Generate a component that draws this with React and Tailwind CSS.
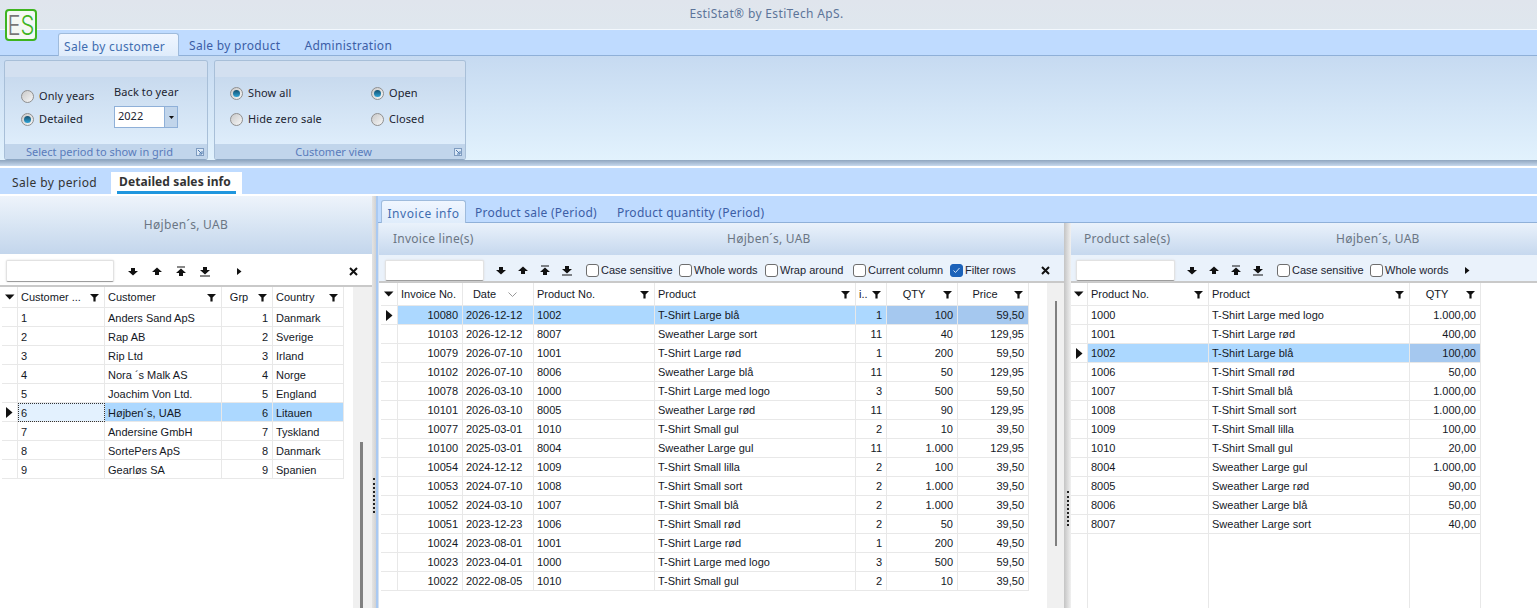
import React from "react";

const F = () => (
  <svg width="9" height="9" viewBox="0 0 9 9" className="shrink-0"><path d="M0 1h9L5.6 4.6V8.5H3.4V4.6z" fill="#111" /></svg>
);
const Down = () => (<svg width="10" height="9" viewBox="0 0 10 9"><path d="M3 1h4v3h3L5 8.5 0 4h3z" fill="#111" /></svg>);
const Up = () => (<svg width="10" height="9" viewBox="0 0 10 9"><path d="M3 8h4V5h3L5 .5 0 5h3z" fill="#111" /></svg>);
const Top = () => (<svg width="10" height="11" viewBox="0 0 10 11"><path d="M1 .5h8v1H1z" fill="#111" /><path d="M3 10h4V7h3L5 2.5 0 7h3z" fill="#111" /></svg>);
const Bot = () => (<svg width="10" height="11" viewBox="0 0 10 11"><path d="M0 9.5h10v1H0z" fill="#111" /><path d="M3 1h4v3h3L5 8.5 0 4h3z" fill="#111" /></svg>);
const Next = () => (<svg width="5" height="9" viewBox="0 0 5 9"><path d="M0 1l4.5 3.5L0 8z" fill="#111" /></svg>);
const X = () => (<svg width="9" height="9" viewBox="0 0 9 9"><path d="M1 1l7 7M8 1L1 8" stroke="#111" strokeWidth="2" /></svg>);
const HeadTri = () => (<svg width="10" height="6" viewBox="0 0 10 6"><path d="M0 .5h9.5L4.7 5.5z" fill="#111" /></svg>);
const RowTri = () => (<svg width="7" height="11" viewBox="0 0 7 11"><path d="M0 0l6.5 5.5L0 11z" fill="#111" /></svg>);
const Launcher = () => (
  <svg width="8" height="8" viewBox="0 0 8 8"><rect x=".5" y=".5" width="7" height="7" fill="#dbe8f6" stroke="#7f9cc0" /><path d="M2 2l3.5 3.5M6 3v3H3" stroke="#4d78ad" fill="none" /></svg>
);

function Radio({ on, label }) {
  return (
    <div className="flex items-center gap-[5px] h-[16px]">
      <span className="w-[13px] h-[13px] rounded-full border border-[#8f8f8f] bg-gradient-to-br from-[#c9c9c9] to-[#f7f7f7] flex items-center justify-center">
        {on && <span className="w-[7px] h-[7px] rounded-full bg-gradient-to-b from-[#14506f] to-[#2fa5d8]" />}
      </span>
      <span className="text-[11px] text-[#1c2430] tracking-[0.1px]">{label}</span>
    </div>
  );
}

function Group({ w, label, children }) {
  return (
    <div className="flex flex-col rounded-[3px] border border-[#a8bfd8] border-b-[#8ea8c4] overflow-hidden" style={{ width: w }}>
      <div className="h-[16px] bg-[#d3e0f0]" />
      <div className="flex-1 bg-gradient-to-b from-[#c8daee] to-[#deedfb]">{children}</div>
      <div className="h-[15px] bg-[#c1d5eb] flex items-center">
        <span className="flex-1 text-center text-[11px] leading-none text-[#5a7cbc] pr-[2px]">{label}</span>
        <span className="mr-[3px] flex"><Launcher /></span>
      </div>
    </div>
  );
}

function Check({ on, label, w }) {
  return (
    <div className="flex items-center gap-[2px] text-[11px] text-[#1c2430] whitespace-nowrap" style={{ width: w, fontFamily: '"Liberation Sans", sans-serif' }}>
      <span className={"w-[13px] h-[13px] rounded-[3px] border flex items-center justify-center shrink-0 " + (on ? "bg-[#1c62b9] border-[#1c62b9]" : "bg-white border-[#6e6e6e]")}>
        {on && <svg width="9" height="9" viewBox="0 0 9 9"><path d="M1.5 4.5l2 2 4-4.5" stroke="#cfe2f7" fill="none" /></svg>}
      </span>
      {label}
    </div>
  );
}

function NavIcons({ gap }) {
  return (
    <div className={"flex items-center " + gap}>
      <span className="flex"><Down /></span>
      <span className="flex"><Up /></span>
      <span className="flex"><Top /></span>
      <span className="flex"><Bot /></span>
    </div>
  );
}

const line = "border-r border-b border-[#e8e8e8]";

function Grid({ cols, rows, current, focus = -1, hot = [], ind, headH = "h-[23px]", extend = false, textPad = "" }) {
  return (
    <div className={"text-[11px] text-[#14181f] " + (extend ? "flex flex-col flex-1 min-h-0" : "")} style={{ fontFamily: '"Liberation Sans", sans-serif' }}>
      <div className={"flex " + headH}>
        <div className={"flex items-center justify-center " + line} style={{ width: ind }}><HeadTri /></div>
        {cols.map((c, i) => (
          <div key={i} className={"flex items-center pl-[3px] pr-[5px] " + line} style={{ width: c.w }}>
            <span className={"flex-1 whitespace-nowrap overflow-hidden " + (c.hc ? "text-center pr-[5px]" : "")}>{c.t}</span>
            {c.sort ? <svg width="9" height="5" viewBox="0 0 9 5" className="mr-[11px]"><path d="M.5.5l4 4 4-4" stroke="#999" fill="none" /></svg> : c.nof ? null : <F />}
          </div>
        ))}
      </div>
      {rows.map((r, ri) => {
        const sel = ri === current;
        return (
          <div key={ri} className="flex h-[19px]">
            <div className={"flex items-center justify-center " + line} style={{ width: ind }}>{sel && <RowTri />}</div>
            {cols.map((c, i) => {
              const isFocus = sel && i === focus;
              return (
                <div
                  key={i}
                  className={"flex items-center px-[3px] whitespace-nowrap overflow-hidden " + textPad + " " + line + " " + (c.right ? "justify-end pr-[4px] " : "") + (isFocus ? "bg-[#e3f1fe] outline-1 outline-dotted -outline-offset-1 outline-[#333] " : sel ? (hot.includes(i) ? "bg-[#a5c8ef] " : "bg-[#acd8ff] ") : "")}
                  style={{ width: c.w }}
                >
                  {r[i]}
                </div>
              );
            })}
          </div>
        );
      })}
      {extend && (
        <div className="flex flex-1">
          <div className="border-r border-[#e8e8e8]" style={{ width: ind }} />
          {cols.map((c, i) => <div key={i} className="border-r border-[#e8e8e8]" style={{ width: c.w }} />)}
        </div>
      )}
    </div>
  );
}

function PanelHead({ left, name, cx, ml }) {
  return (
    <div className="h-[32px] shrink-0 bg-gradient-to-b from-[#eaf2fb] to-[#c6d8ee] flex items-center text-[12px] text-[#6b7684] tracking-[0.25px] relative">
      <span style={{ marginLeft: ml }}>{left}</span>
      <span className="absolute" style={{ left: cx }}>{name}</span>
    </div>
  );
}

const Search = ({ w, h = 21 }) => <div className="shrink-0 bg-white border border-[#e2e2e2] border-b-[#9d9d9d] rounded-[2px] shadow-[0_0_2px_#d8d8d8]" style={{ width: w, height: h }} />;

const custCols = [
  { t: "Customer ...", w: 87 }, { t: "Customer", w: 117 }, { t: "Grp", w: 51, hc: true, right: true }, { t: "Country", w: 71 },
];
const custRows = [
  ["1", "Anders Sand ApS", "1", "Danmark"],
  ["2", "Rap AB", "2", "Sverige"],
  ["3", "Rip Ltd", "3", "Irland"],
  ["4", "Nora ´s Malk AS", "4", "Norge"],
  ["5", "Joachim Von Ltd.", "5", "England"],
  ["6", "Højben´s, UAB", "6", "Litauen"],
  ["7", "Andersine GmbH", "7", "Tyskland"],
  ["8", "SortePers ApS", "8", "Danmark"],
  ["9", "Gearløs SA", "9", "Spanien"],
];
const invCols = [
  { t: "Invoice No.", w: 65, right: true, nof: true },
  { t: "Date", w: 71, hc: true, sort: true, nof: true },
  { t: "Product No.", w: 121 },
  { t: "Product", w: 201 },
  { t: "i..", w: 31, right: true },
  { t: "QTY", w: 71, right: true, hc: true },
  { t: "Price", w: 71, right: true, hc: true },
];
const invRows = [
  ["10080", "2026-12-12", "1002", "T-Shirt Large blå", "1", "100", "59,50"],
  ["10103", "2026-12-12", "8007", "Sweather Large sort", "11", "40", "129,95"],
  ["10079", "2026-07-10", "1001", "T-Shirt Large rød", "1", "200", "59,50"],
  ["10102", "2026-07-10", "8006", "Sweather Large blå", "11", "50", "129,95"],
  ["10078", "2026-03-10", "1000", "T-Shirt Large med logo", "3", "500", "59,50"],
  ["10101", "2026-03-10", "8005", "Sweather Large rød", "11", "90", "129,95"],
  ["10077", "2025-03-01", "1010", "T-Shirt Small gul", "2", "10", "39,50"],
  ["10100", "2025-03-01", "8004", "Sweather Large gul", "11", "1.000", "129,95"],
  ["10054", "2024-12-12", "1009", "T-Shirt Small lilla", "2", "100", "39,50"],
  ["10053", "2024-07-10", "1008", "T-Shirt Small sort", "2", "1.000", "39,50"],
  ["10052", "2024-03-10", "1007", "T-Shirt Small blå", "2", "1.000", "39,50"],
  ["10051", "2023-12-23", "1006", "T-Shirt Small rød", "2", "50", "39,50"],
  ["10024", "2023-08-01", "1001", "T-Shirt Large rød", "1", "200", "49,50"],
  ["10023", "2023-04-01", "1000", "T-Shirt Large med logo", "3", "500", "59,50"],
  ["10022", "2022-08-05", "1010", "T-Shirt Small gul", "2", "10", "39,50"],
];
const prodCols = [
  { t: "Product No.", w: 121 }, { t: "Product", w: 201 }, { t: "QTY", w: 71, right: true, hc: true },
];
const prodRows = [
  ["1000", "T-Shirt Large med logo", "1.000,00"],
  ["1001", "T-Shirt Large rød", "400,00"],
  ["1002", "T-Shirt Large blå", "100,00"],
  ["1006", "T-Shirt Small rød", "50,00"],
  ["1007", "T-Shirt Small blå", "1.000,00"],
  ["1008", "T-Shirt Small sort", "1.000,00"],
  ["1009", "T-Shirt Small lilla", "100,00"],
  ["1010", "T-Shirt Small gul", "20,00"],
  ["8004", "Sweather Large gul", "1.000,00"],
  ["8005", "Sweather Large rød", "90,00"],
  ["8006", "Sweather Large blå", "50,00"],
  ["8007", "Sweather Large sort", "40,00"],
];

const Grip = () => (
  <div className="w-[2px] h-[35px] border-l-2 border-dotted border-[#222]" />
);

export default function App() {
  return (
    <div className="w-[1537px] h-[608px] overflow-hidden bg-white flex flex-col relative" style={{ fontFamily: '"Noto Sans", Tahoma, sans-serif' }}>
      <div className="h-[30px] bg-gradient-to-b from-[#e0e5ed] to-[#dfe7ee] flex items-center justify-center text-[12px] tracking-[0.35px] text-[#5c7499] border-b border-[#f3f8fd] pb-[2px] pr-[4px]">
        EstiStat® by EstiTech ApS.
      </div>
      <div className="absolute left-[5px] top-[9px] w-[32px] h-[32px] rounded-[4px] border-2 border-[#3eb41f] bg-[#f4f8f4] flex items-center justify-center text-[22px] leading-none" style={{ fontFamily: 'Inter, sans-serif' }}>
        <span className="scale-y-[1.25] flex font-light">
          <span className="text-[#777]">E</span><span className="text-[#3eb41f]">S</span>
        </span>
      </div>
      <div className="h-[26px] bg-[#bfdbff] border-b border-[#8fb0d8] flex items-end pl-[58px] text-[12px] text-[#3c5ea6] tracking-[0.3px]">
        <div className="w-[121px] h-[23px] -mb-px bg-gradient-to-b from-[#f0f6ff] to-[#dfecfb] border border-[#9fbbdc] border-b-0 rounded-t-[3px] flex items-center justify-center text-[#3f6db0] pt-[3px] pr-[8px]">Sale by customer</div>
        <div className="ml-[10px] h-[23px] flex items-center pt-[5px]">Sale by product</div>
        <div className="ml-[24px] h-[23px] flex items-center pt-[5px]">Administration</div>
      </div>
      <div className="h-[104px] bg-gradient-to-b from-[#c6daf1] to-[#e2f2fd] flex gap-[6px] pl-[4px] pt-[4px]">
        <Group w={204} label="Select period to show in grid">
          <div className="flex pl-[16px]">
            <div className="flex flex-col gap-[7px] pt-[11px] w-[93px]">
              <Radio label="Only years" />
              <Radio on label="Detailed" />
            </div>
            <div className="pt-[6px]">
              <div className="text-[11px] text-[#1c2430] leading-[18px] tracking-[0.1px]">Back to year</div>
              <div className="mt-[5px] flex w-[64px] h-[22px] border border-[#8fb0d8] bg-white text-[11px] text-[#1c2430]">
                <span className="flex-1 pl-[3px] leading-[18px]">2022</span>
                <span className="w-[13px] bg-[#c1d5eb] border-l border-[#8fb0d8] flex items-center justify-center">
                  <svg width="5" height="3" viewBox="0 0 5 3"><path d="M0 0h5L2.5 3z" fill="#111" /></svg>
                </span>
              </div>
            </div>
          </div>
        </Group>
        <Group w={252} label="Customer view">
          <div className="grid grid-cols-[141px_80px] gap-y-[10px] pl-[15px] pt-[8px]">
            <Radio on label="Show all" />
            <Radio on label="Open" />
            <Radio label="Hide zero sale" />
            <Radio label="Closed" />
          </div>
        </Group>
      </div>
      <div className="h-[8px] bg-gradient-to-b from-[#8fa5bf] to-[#c7d9ee] border-b-2 border-[#fff]" />
      <div className="h-[28px] bg-[#bfdbff] flex items-end text-[12px] text-[#333] border-b-2 border-[#fff]">
        <div className="pl-[12px] w-[111px] h-[22px] flex items-center tracking-[0.4px]">Sale by period</div>
        <div className="w-[131px] h-[22px] bg-white pl-[6px] pr-[6px] flex flex-col">
          <span className="flex-1 flex items-center pl-[2px] pt-[1px] font-bold whitespace-nowrap text-[12px] tracking-[0.1px]">Detailed sales info</span>
          <span className="h-[3px] bg-[#1f96de]" />
        </div>
      </div>

      <div className="flex-1 flex min-h-0">
        {/* left */}
        <div className="w-[372px] flex flex-col">
          <div className="h-[58px] bg-gradient-to-b from-[#eef4fb] to-[#c3d6ec] flex items-center justify-center text-[12px] text-[#6b7684] tracking-[0.3px]">Højben´s, UAB</div>
          <div className="h-[33px] flex items-center pl-[6px] pr-[14px] pt-[3px] border-b-2 border-[#c9c9c9]">
            <Search w={108} h={22} />
            <div className="ml-[14px]"><NavIcons gap="gap-[14px]" /></div>
            <span className="ml-[27px] flex"><Next /></span>
            <span className="ml-auto flex"><X /></span>
          </div>
          <div className="flex flex-1 min-h-0">
            <div className="w-[353px] pl-[2px]"><Grid cols={custCols} rows={custRows} current={5} focus={0} ind={16} headH="h-[21px]" textPad="pt-[2px]" /></div>
            <div className="w-[19px] bg-[#f0f0f0] pt-[155px] pr-[2px] flex justify-center"><div className="w-[3px] h-full bg-[#808080]" /></div>
          </div>
        </div>
        {/* splitter */}
        <div className="w-[4px] bg-gradient-to-r from-[#e4e4e4] to-[#d2d2d2] flex items-center justify-center pt-[186px]"><Grip /></div>
        {/* right area */}
        <div className="flex-1 flex flex-col min-w-0 border-l-2 border-[#a9c9f2]">
          <div className="h-[27px] bg-[#bfdbff] border-b border-[#8fb0d8] flex items-end pl-[3px] text-[12px] text-[#3c5ea6] tracking-[0.25px]">
            <div className="w-[85px] h-[23px] -mb-px bg-gradient-to-b from-[#f0f6ff] to-[#dfecfb] border border-[#9fbbdc] border-b-0 rounded-t-[3px] flex items-center justify-center text-[#3f6db0] tracking-[0.55px] pt-[3px]">Invoice info</div>
            <div className="ml-[9px] h-[23px] flex items-center pt-[4px]">Product sale (Period)</div>
            <div className="ml-[20px] h-[23px] flex items-center pt-[4px]">Product quantity (Period)</div>
          </div>
          <div className="flex-1 flex min-h-0">
            <div className="w-[686px] flex flex-col border-l border-[#d6e2f0]">
              <PanelHead left="Invoice line(s)" name="Højben´s, UAB" cx={348} ml={14} />
              <div className="h-[28px] shrink-0 bg-[#eaf2fb] flex items-center pl-[6px] pr-[14px] pt-[5px] border-b-2 border-[#c9c9c9]">
                <Search w={99} />
                <div className="ml-[12px]"><NavIcons gap="gap-[12px]" /></div>
                <div className="ml-[14px] flex">
                  <Check label="Case sensitive" w={93} />
                  <Check label="Whole words" w={86} />
                  <Check label="Wrap around" w={88} />
                  <Check label="Current column" w={97} />
                  <Check on label="Filter rows" />
                </div>
                <span className="ml-auto flex"><X /></span>
              </div>
              <div className="flex flex-1 min-h-0 pl-[2px]">
                <div className="w-[666px]"><Grid cols={invCols} rows={invRows} current={0} hot={[5, 6]} ind={17} /></div>
                <div className="w-[17px] bg-[#f0f0f0] flex justify-center pt-[18px]"><div className="w-[2px] h-[245px] bg-[#808080]" /></div>
              </div>
            </div>
            <div className="w-[7px] bg-gradient-to-r from-[#c4c4c4] to-[#f1f1f1] flex items-center justify-center pt-[185px]"><Grip /></div>
            <div className="flex-1 flex flex-col min-w-0">
              <PanelHead left="Product sale(s)" name="Højben´s, UAB" cx={265} ml={13} />
              <div className="h-[28px] shrink-0 bg-[#eaf2fb] flex items-center pl-[5px] pt-[5px] border-b-2 border-[#c9c9c9]">
                <Search w={99} />
                <div className="ml-[12px]"><NavIcons gap="gap-[12px]" /></div>
                <div className="ml-[14px] flex">
                  <Check label="Case sensitive" w={93} />
                  <Check label="Whole words" w={95} />
                </div>
                <span className="flex"><Next /></span>
              </div>
              <Grid cols={prodCols} rows={prodRows} current={2} hot={[2]} ind={17} extend />
            </div>
          </div>
        </div>
      </div>
    </div>
  );
}
